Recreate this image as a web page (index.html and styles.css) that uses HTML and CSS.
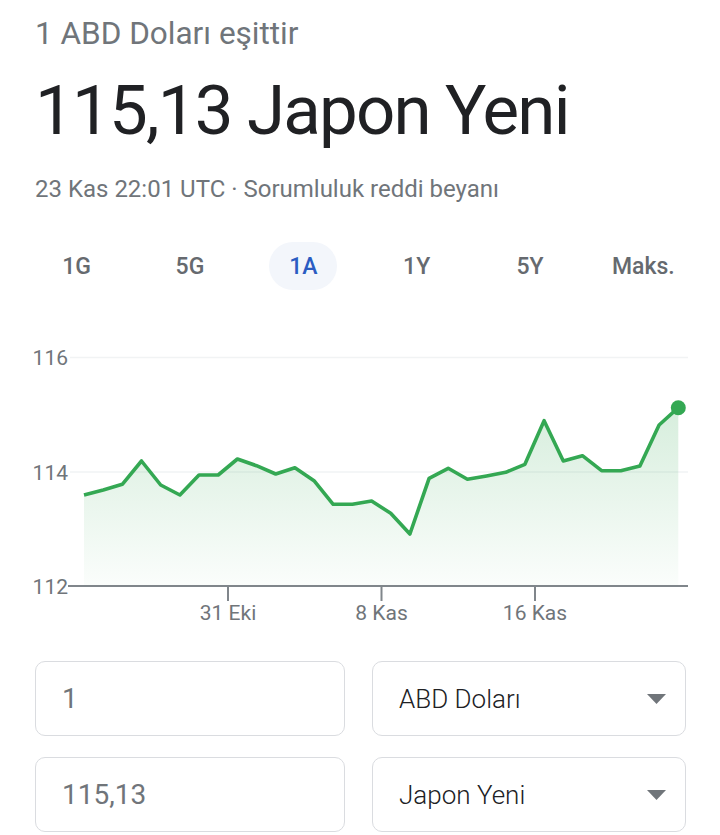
FILE: index.html
```html
<!DOCTYPE html>
<html lang="tr">

<head>
    <meta charset="UTF-8">
    <meta name="viewport" content="width=device-width, initial-scale=1.0">
    <title>ABD Doları - Japon Yeni</title>
    <link rel="stylesheet" href="styles.css">
</head>

<body>
    <div class="summary">
        <div class="from">1 ABD Doları eşittir</div>
        <div class="result">115,13 Japon Yeni</div>
        <div class="meta">23 Kas 22:01 UTC · Sorumluluk reddi beyanı</div>
    </div>

    <div class="ranges">
        <div class="range"><span>1G</span></div>
        <div class="range"><span>5G</span></div>
        <div class="range active"><span>1A</span></div>
        <div class="range"><span>1Y</span></div>
        <div class="range"><span>5Y</span></div>
        <div class="range"><span>Maks.</span></div>
    </div>

    <svg class="chart" viewBox="0 330 720 300" width="720" height="300">
        <defs>
            <linearGradient id="area" x1="0" y1="407" x2="0" y2="586" gradientUnits="userSpaceOnUse">
                <stop offset="0" stop-color="#34a853" stop-opacity="0.2" />
                <stop offset="1" stop-color="#34a853" stop-opacity="0.02" />
            </linearGradient>
        </defs>

        <line class="grid" x1="70" y1="357.5" x2="688" y2="357.5" />
        <line class="grid" x1="70" y1="472" x2="688" y2="472" />

        <polygon fill="url(#area)" points="84,495 103.2,490 122.3,484.3 141.5,461 160.7,485 179.9,495 199,475 218.2,475 237.4,459 256.5,465.7 275.7,474 294.9,467.7 314,480.7 333.2,504.3 352.4,504.3 371.6,501 390.7,513.3 409.9,534 429.1,478.3 448.2,468.3 467.4,479.3 486.6,476 505.7,472.3 524.9,464.3 544.1,420.7 563.3,461 582.4,455.7 601.6,470.7 620.8,470.7 639.9,466 659.1,425 678.3,407.7 678.3,586 84,586" />

        <line class="axis" x1="68" y1="586" x2="688" y2="586" />
        <line class="axis" x1="228" y1="586" x2="228" y2="601" />
        <line class="axis" x1="381.5" y1="586" x2="381.5" y2="601" />
        <line class="axis" x1="535" y1="586" x2="535" y2="601" />

        <polyline class="line" points="84,495 103.2,490 122.3,484.3 141.5,461 160.7,485 179.9,495 199,475 218.2,475 237.4,459 256.5,465.7 275.7,474 294.9,467.7 314,480.7 333.2,504.3 352.4,504.3 371.6,501 390.7,513.3 409.9,534 429.1,478.3 448.2,468.3 467.4,479.3 486.6,476 505.7,472.3 524.9,464.3 544.1,420.7 563.3,461 582.4,455.7 601.6,470.7 620.8,470.7 639.9,466 659.1,425 678.3,407.7" />
        <circle class="dot" cx="678.3" cy="407.7" r="7.5" />

        <text class="label" x="68" y="365" text-anchor="end">116</text>
        <text class="label" x="68" y="479.5" text-anchor="end">114</text>
        <text class="label" x="68" y="593.5" text-anchor="end">112</text>
        <text class="label" x="228" y="620" text-anchor="middle">31 Eki</text>
        <text class="label" x="381.5" y="620" text-anchor="middle">8 Kas</text>
        <text class="label" x="535" y="620" text-anchor="middle">16 Kas</text>
    </svg>

    <div class="converter">
        <div class="field amount">1</div>
        <div class="field currency">
            <span>ABD Doları</span>
            <svg class="caret" width="19" height="10" viewBox="0 0 19 10"><polygon points="0,0 19,0 9.5,10" /></svg>
        </div>
        <div class="field amount">115,13</div>
        <div class="field currency">
            <span>Japon Yeni</span>
            <svg class="caret" width="19" height="10" viewBox="0 0 19 10"><polygon points="0,0 19,0 9.5,10" /></svg>
        </div>
    </div>
</body>

</html>
```

FILE: styles.css
```css
body {
    font-family: Roboto, "Noto Sans", Arial, sans-serif;
    background-color: #fff;
    color: #202124;
    margin: 0;
    width: 720px;
}

.summary {
    padding: 16px 35px 0 35px;
}

.from {
    font-size: 31.5px;
    line-height: 36px;
    color: #70757a;
}

.result {
    margin-top: 19px;
    font-size: 69px;
    line-height: 80px;
    letter-spacing: -1.8px;
    color: #202124;
}

.meta {
    margin-top: 23px;
    font-size: 24px;
    line-height: 30px;
    color: #70757a;
}

.ranges {
    display: grid;
    grid-template-columns: repeat(6, 1fr);
    padding: 0 20px;
    margin-top: 38px;
}

.range {
    display: flex;
    justify-content: center;
}

.range span {
    display: flex;
    align-items: center;
    height: 48px;
    padding: 0 20px;
    border-radius: 24px;
    font-size: 23px;
    font-weight: 500;
    color: #666a6f;
}

.range.active span {
    background-color: #f3f6fb;
    color: #2a5cc2;
}

.chart {
    display: block;
    margin-top: 40px;
}

.chart .grid {
    stroke: #f1f3f4;
    stroke-width: 1.5;
}

.chart .axis {
    stroke: #80868b;
    stroke-width: 2;
}

.chart .line {
    fill: none;
    stroke: #34a853;
    stroke-width: 3.6;
    stroke-linejoin: round;
}

.chart .dot {
    fill: #34a853;
}

.chart .label {
    font-family: Roboto, sans-serif;
    font-size: 21px;
    fill: #70757a;
}

.converter {
    display: grid;
    grid-template-columns: 310px 1fr;
    column-gap: 27px;
    row-gap: 21px;
    padding: 0 34px 0 35px;
    margin-top: 31px;
}

.field {
    display: flex;
    align-items: center;
    height: 75px;
    box-sizing: border-box;
    padding: 0 19px 0 26px;
    border: 1.5px solid #dadce0;
    border-radius: 10px;
}

.amount {
    font-size: 28px;
    color: #70757a;
}

.currency {
    justify-content: space-between;
    font-size: 26px;
    font-weight: 300;
    color: #202124;
}

.caret {
    fill: #70757a;
}
```
